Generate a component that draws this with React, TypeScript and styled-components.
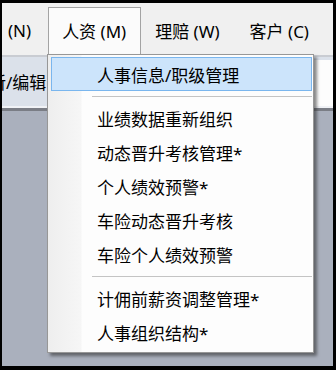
import React from "react";
import styled, { createGlobalStyle } from "styled-components";

const Global = createGlobalStyle`
  html, body { margin: 0; padding: 0; background: #000; }
  body { width: 336px; height: 370px; overflow: hidden; }
  * { box-sizing: border-box; }
`;

const FONT = `"Noto Sans", "Noto Sans CJK SC", sans-serif`;

const Frame = styled.div`
  position: relative;
  width: 336px;
  height: 370px;
  border-style: solid;
  border-color: #000;
  border-width: 3px 3px 4px 2px;
  background: #aab0bd;
  overflow: hidden;
  display: flex;
  flex-direction: column;
  font-family: ${FONT};
`;

const MenuBar = styled.div`
  height: 54px;
  flex: none;
  background: #f0f0f0;
  display: flex;
  align-items: flex-end;
  padding-left: 5px;
  border-bottom: 2px solid #c9ccd2;
`;

const BarItem = styled.div<{ $open?: boolean; $pl: number; $pr: number }>`
  height: 48px;
  display: flex;
  align-items: center;
  padding: 0 ${(p) => p.$pr}px 2px ${(p) => p.$pl}px;
  font-size: 17px;
  color: #000;
  white-space: nowrap;
  background: ${(p) => (p.$open ? "#fbfbfb" : "transparent")};
  border: 1px solid ${(p) => (p.$open ? "#a3a3a3" : "transparent")};
  border-bottom: none;
`;

const Toolbar = styled.div`
  height: 51px;
  flex: none;
  display: flex;
  align-items: center;
  background: #dbe1ea;
  border-bottom: 2px solid #f0f2f6;
  overflow: hidden;
`;

const ToolLabel = styled.span`
  margin-left: -13px;
  font-size: 17px;
  color: #000;
  white-space: nowrap;
  flex: none;
`;

const ToolSpacer = styled.div`
  flex: 1;
`;

const WhitePanel = styled.div`
  width: 120px;
  align-self: stretch;
  margin-top: 3px;
  background: #fdfdfd;
`;

const Divider = styled.div`
  height: 3px;
  flex: none;
  background: #7a7d85;
`;

const Workspace = styled.div`
  flex: 1;
  background: #aab0bd;
`;

const Dropdown = styled.div`
  position: absolute;
  left: 45px;
  top: 51px;
  width: 267px;
  border: 1px solid #979797;
  padding: 2px 1px 3px 3px;
  background: linear-gradient(90deg, #eeeeee 0px, #f6f6f6 33px, #fdfdfd 34px);
  box-shadow: 3px 3px 3px rgba(40, 40, 40, 0.55);
  display: flex;
  flex-direction: column;
`;

const Item = styled.div<{ $hot?: boolean }>`
  height: 34px;
  display: flex;
  align-items: center;
  padding-left: 45px;
  font-size: 17px;
  color: #000;
  white-space: nowrap;
  border: 1px solid ${(p) => (p.$hot ? "#7ab6ee" : "transparent")};
  background: ${(p) => (p.$hot ? "#cce4fb" : "transparent")};
`;

const Sep = styled.div`
  height: 10px;
  flex: none;
  display: flex;
  align-items: center;
  padding-left: 41px;
  &::after {
    content: "";
    flex: 1;
    height: 1px;
    margin-top: 1px;
    background: #c4c4c4;
  }
`;

export default function App() {
  return (
    <>
      <Global />
      <Frame>
        <MenuBar>
          <BarItem $pl={0} $pr={16}>(N)</BarItem>
          <BarItem $open $pl={13} $pr={14}>人资 (M)</BarItem>
          <BarItem $pl={13} $pr={14}>理赔 (W)</BarItem>
          <BarItem $pl={14} $pr={14}>客户 (C)</BarItem>
        </MenuBar>
        <Toolbar>
          <ToolLabel>新/编辑</ToolLabel>
          <ToolSpacer />
          <WhitePanel />
        </Toolbar>
        <Divider />
        <Workspace />
        <Dropdown>
          <Item $hot>人事信息/职级管理</Item>
          <Sep />
          <Item>业绩数据重新组织</Item>
          <Item>动态晋升考核管理*</Item>
          <Item>个人绩效预警*</Item>
          <Item>车险动态晋升考核</Item>
          <Item>车险个人绩效预警</Item>
          <Sep />
          <Item>计佣前薪资调整管理*</Item>
          <Item>人事组织结构*</Item>
        </Dropdown>
      </Frame>
    </>
  );
}
